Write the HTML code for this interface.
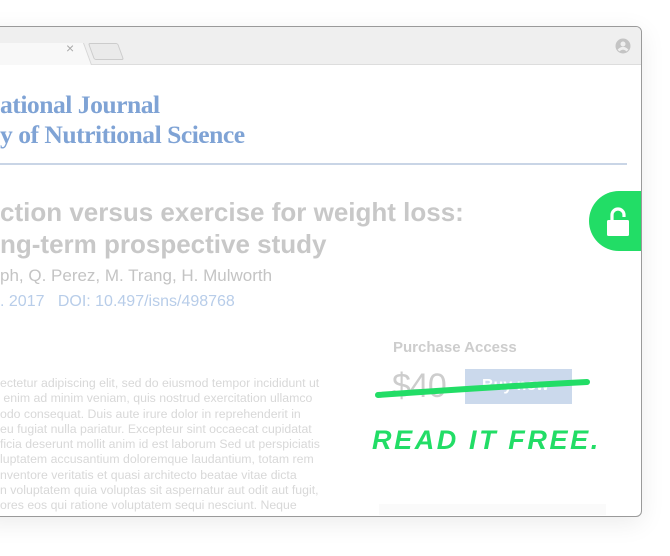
<!DOCTYPE html>
<html><head><style>
body{margin:0;width:670px;height:556px;background:#fff;position:relative;overflow:hidden;font-family:"Liberation Sans",sans-serif}
.win{position:absolute;left:-20px;top:26px;width:660px;height:489px;border:1px solid #9a9a9a;border-radius:6px;background:#fff;overflow:hidden;box-shadow:0 6px 25px rgba(0,0,0,.08)}
.bar{position:absolute;left:0;top:0;right:0;height:37px;background:#efefef;border-bottom:1px solid #ddd}
.tab{position:absolute;left:0;top:16px;width:110px;height:22px;background:#f8f8f8;border-right:1px solid #d6d6d6;transform:skewX(20deg);transform-origin:bottom}
.tab2{position:absolute;left:110px;top:16px;width:28px;height:15px;border:1px solid #ccc;background:#eaeaea;border-radius:2px;transform:skewX(20deg)}
.p{position:absolute;white-space:nowrap}
</style></head><body>
<div class="win">
<div class="bar"><div class="tab"></div><div class="tab2"></div>
<div class="p" style="left:85px;top:13px;color:#aaa;font-size:14px">×</div>
<svg style="position:absolute;left:634px;top:11px" width="16" height="16" viewBox="0 0 16 16"><circle cx="8" cy="8" r="7.5" fill="#c4c4c4"/><circle cx="8" cy="6" r="2.5" fill="#efefef"/><path d="M3.5 12.5Q8 8 12.5 12.5" stroke="#efefef" stroke-width="2.5" fill="none"/></svg>
</div>
<div style="position:absolute;left:608px;top:164px;width:60px;height:60px;border-radius:30px 0 0 30px;background:#22dd66"></div>
<svg style="position:absolute;left:624px;top:179px" width="28" height="32" viewBox="0 0 28 32"><path d="M7 16V9a6 6 0 0 1 12 0v2" stroke="#fff" stroke-width="3.2" fill="none"/><rect x="2" y="14" width="22" height="16" rx="1.5" fill="#fff"/></svg>
</div>
<div class="p" style="left:0;top:90px;font-family:'Liberation Serif',serif;font-size:25.6px;color:#7fa3d5;font-weight:bold;letter-spacing:-0.5px">ational Journal</div>
<div class="p" style="left:0;top:120px;font-family:'Liberation Serif',serif;font-size:25.6px;color:#7fa3d5;font-weight:bold;letter-spacing:-0.5px">y of Nutritional Science</div>
<div style="position:absolute;left:0;top:163px;width:627px;height:2px;background:#c9d5e6"></div>
<div class="p" style="left:0;top:197px;font-size:26px;font-weight:bold;color:#c8c8c8">ction versus exercise for weight loss:</div>
<div class="p" style="left:0;top:229px;font-size:26px;font-weight:bold;color:#c8c8c8">ng-term prospective study</div>
<div class="p" style="left:0;top:266px;font-size:17px;color:#c4c4c4">ph, Q. Perez, M. Trang, H. Mulworth</div>
<div class="p" style="left:0;top:293px;font-size:16px;color:#b8cde9">. 2017 &nbsp; DOI: 10.497/isns/498768</div>
<div class="p" style="left:0;top:376px;font-size:12.3px;line-height:15.3px;color:#d8d8d8">ectetur adipiscing elit, sed do eiusmod tempor incididunt ut<br>&nbsp;enim ad minim veniam, quis nostrud exercitation ullamco<br>odo consequat. Duis aute irure dolor in reprehenderit in<br>eu fugiat nulla pariatur. Excepteur sint occaecat cupidatat<br>ficia deserunt mollit anim id est laborum Sed ut perspiciatis<br>luptatem accusantium doloremque laudantium, totam rem<br>nventore veritatis et quasi architecto beatae vitae dicta<br>n voluptatem quia voluptas sit aspernatur aut odit aut fugit,<br>ores eos qui ratione voluptatem sequi nesciunt. Neque</div>
<div class="p" style="left:393px;top:339px;font-size:15px;font-weight:bold;color:#cdcdcd">Purchase Access</div>
<div class="p" style="left:392px;top:367px;font-size:34px;color:#cdcdcd;letter-spacing:-1px">$40</div>
<div style="position:absolute;left:465px;top:369px;width:107px;height:35px;background:#cbd9ec"></div>
<div class="p" style="left:482px;top:377px;font-size:16px;font-weight:bold;color:#fff">Buy now</div>
<svg style="position:absolute;left:370px;top:372px" width="225" height="30"><path d="M8 23Q120 15 217 10" stroke="#22dd66" stroke-width="6" stroke-linecap="round" fill="none"/></svg>
<div class="p" style="left:372px;top:425px;font-size:27px;font-weight:bold;font-style:italic;color:#22dd66;letter-spacing:2.6px">READ IT FREE.</div>
<div style="position:absolute;left:379px;top:504px;width:227px;height:11px;background:#fafafa"></div>
</body></html>
